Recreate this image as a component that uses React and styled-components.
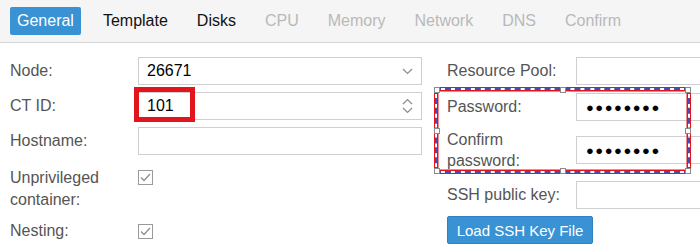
import styled, { createGlobalStyle } from "styled-components";

const Global = createGlobalStyle`
  html, body {
    margin: 0;
    padding: 0;
    background: #fff;
    overflow: hidden;
  }
  body {
    width: 700px;
    height: 252px;
    font-family: "Liberation Sans", Arial, sans-serif;
  }
`;

const Page = styled.div`
  width: 700px;
  height: 252px;
  overflow: hidden;
  position: relative;
`;

const TabBar = styled.div`
  height: 42px;
  background: #f5f5f5;
  border-bottom: 1px solid #d6d6d6;
  display: flex;
  align-items: center;
  padding-left: 10px;
`;

const Tab = styled.div`
  height: 28px;
  display: flex;
  align-items: center;
  padding: 0 7px;
  margin-right: 15px;
  font-size: 16px;
  border-radius: 2px;
  background: ${(p) => (p.$active ? "#3892d4" : "transparent")};
  color: ${(p) => (p.$active ? "#fff" : p.$disabled ? "#b9b9b9" : "#111")};
`;

const Form = styled.div`
  display: flex;
  padding: 14px 0 0 10px;
`;

const Column = styled.div`
  position: relative;
  width: ${(p) => p.$width}px;
  display: flex;
  flex-direction: column;
  flex-shrink: 0;
`;

const Row = styled.div`
  display: flex;
  align-items: ${(p) => (p.$align ? p.$align : "center")};
  min-height: 28px;
  margin-top: ${(p) => p.$top || 0}px;
`;

const Label = styled.div`
  width: ${(p) => p.$width}px;
  flex-shrink: 0;
  font-size: 16px;
  line-height: ${(p) => p.$lh || 20}px;
  color: #555;
`;

const Field = styled.div`
  position: relative;
  width: ${(p) => p.$width}px;
  height: 28px;
  box-sizing: border-box;
  border: 1px solid #cfcfcf;
  background: #fff;
  display: flex;
  align-items: center;
  padding-left: 8px;
  font-size: 16px;
  color: #000;
  flex-shrink: 0;
`;

const Trigger = styled.div`
  position: absolute;
  right: 8px;
  top: 0;
  bottom: 0;
  display: flex;
  flex-direction: column;
  justify-content: center;
  gap: 2px;
`;

const Dots = styled.span`
  font-size: 13px;
  letter-spacing: 1.5px;
  padding-left: 1px;
`;

const Check = styled.div`
  width: 15px;
  height: 15px;
  box-sizing: border-box;
  border: 1px solid #9a9a9a;
  margin-top: ${(p) => p.$top || 0}px;
  display: flex;
  align-items: center;
  justify-content: center;
`;

const Button = styled.div`
  width: 146px;
  height: 28px;
  box-sizing: border-box;
  background: #3892d4;
  border: 1px solid #2f80bd;
  border-radius: 2px;
  color: #fff;
  font-size: 15px;
  display: flex;
  align-items: center;
  justify-content: center;
  margin-top: ${(p) => p.$top}px;
`;

const RedBox = styled.div`
  position: absolute;
  left: -5px;
  top: -6px;
  width: 61px;
  height: 35px;
  box-sizing: border-box;
  border: 5px solid #e2141c;
`;

const Selection = styled.div`
  position: absolute;
  left: -12px;
  top: 31px;
  width: 255px;
  height: 85px;
  box-sizing: border-box;
  border: 2px dashed #3a52b8;
  outline: 1.5px solid #e8121c;
  box-shadow: inset 0 0 0 1.5px #e8121c;
`;

const Handle = styled.div`
  position: absolute;
  width: 4px;
  height: 4px;
  background: #fff;
  border: 1px solid #8a8a8a;
  left: ${(p) => p.$x};
  top: ${(p) => p.$y};
  transform: translate(-50%, -50%);
`;

const Chevron = ({ up }) => (
  <svg width="11" height="7" viewBox="0 0 11 7">
    <path
      d={up ? "M1 6 L5.5 1.5 L10 6" : "M1 1 L5.5 5.5 L10 1"}
      fill="none"
      stroke="#8c8c8c"
      strokeWidth="1.2"
    />
  </svg>
);

const Tick = () => (
  <svg width="11" height="9" viewBox="0 0 11 9">
    <path d="M1 4.5 L4 7.5 L10 1" fill="none" stroke="#8f8f8f" strokeWidth="1.3" />
  </svg>
);

const tabs = [
  { name: "General", active: true },
  { name: "Template" },
  { name: "Disks" },
  { name: "CPU", disabled: true },
  { name: "Memory", disabled: true },
  { name: "Network", disabled: true },
  { name: "DNS", disabled: true },
  { name: "Confirm", disabled: true },
];

const handles = [
  ["0%", "0%"], ["50%", "0%"], ["100%", "0%"],
  ["0%", "50%"], ["100%", "50%"],
  ["0%", "100%"], ["50%", "100%"], ["100%", "100%"],
];

export default function App() {
  return (
    <Page>
      <Global />
      <TabBar>
        {tabs.map((t) => (
          <Tab key={t.name} $active={t.active} $disabled={t.disabled}>
            {t.name}
          </Tab>
        ))}
      </TabBar>
      <Form>
        <Column $width={437}>
          <Row>
            <Label $width={128}>Node:</Label>
            <Field $width={284}>
              26671
              <Trigger>
                <Chevron />
              </Trigger>
            </Field>
          </Row>
          <Row $top={7}>
            <Label $width={128}>CT ID:</Label>
            <Field $width={284}>
              101
              <RedBox />
              <Trigger>
                <Chevron up />
                <Chevron />
              </Trigger>
            </Field>
          </Row>
          <Row $top={7}>
            <Label $width={128}>Hostname:</Label>
            <Field $width={284} />
          </Row>
          <Row $top={12} $align="flex-start">
            <Label $width={128} $lh={22}>
              Unprivileged
              <br />
              container:
            </Label>
            <Check $top={3}>
              <Tick />
            </Check>
          </Row>
          <Row $top={6}>
            <Label $width={128}>Nesting:</Label>
            <Check>
              <Tick />
            </Check>
          </Row>
        </Column>
        <Column $width={280}>
          <Row>
            <Label $width={129}>Resource Pool:</Label>
            <Field $width={140} />
          </Row>
          <Row $top={8}>
            <Label $width={129}>Password:</Label>
            <Field $width={140}>
              <Dots>●●●●●●●●</Dots>
            </Field>
          </Row>
          <Row $top={8}>
            <Label $width={129} $lh={21}>
              Confirm
              <br />
              password:
            </Label>
            <Field $width={140}>
              <Dots>●●●●●●●●</Dots>
            </Field>
          </Row>
          <Row $top={10}>
            <Label $width={129}>SSH public key:</Label>
            <Field $width={140} />
          </Row>
          <Button $top={7}>Load SSH Key File</Button>
          <Selection>
            {handles.map(([x, y], i) => (
              <Handle key={i} $x={x} $y={y} />
            ))}
          </Selection>
        </Column>
      </Form>
    </Page>
  );
}
